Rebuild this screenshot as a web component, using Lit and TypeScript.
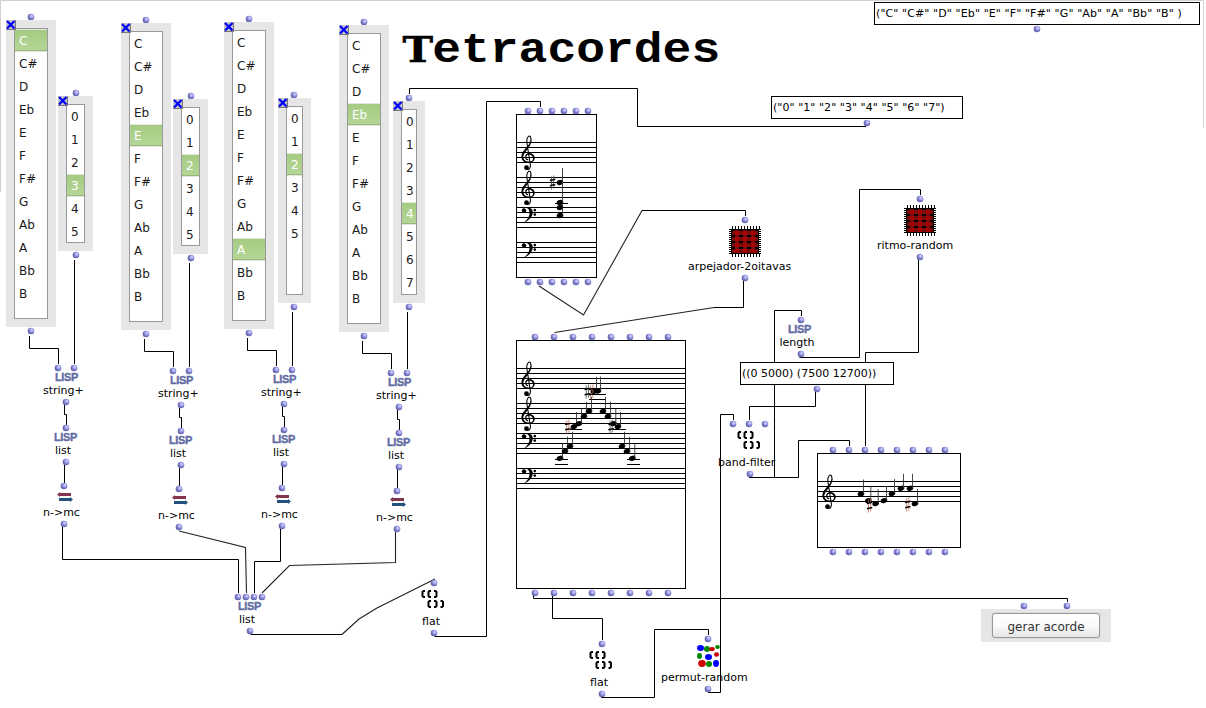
import { LitElement, html, svg, css } from "lit";
import { customElement, property } from "lit/decorators.js";

type Pt = [number, number];

const NOTES = ["C", "C#", "D", "Eb", "E", "F", "F#", "G", "Ab", "A", "Bb", "B"];
const nums = (n: number) => Array.from({ length: n }, (_, i) => String(i));

interface ListSpec {
  x: number; y: number; w: number; h: number;
  items: string[]; sel: number; port: number;
}

const LISTS: ListSpec[] = [
  { x: 6, y: 20, w: 50, h: 307, items: NOTES, sel: 0, port: 31 },
  { x: 58, y: 96, w: 35, h: 155, items: nums(6), sel: 3, port: 76 },
  { x: 121, y: 23, w: 50, h: 307, items: NOTES, sel: 4, port: 146 },
  { x: 173, y: 99, w: 35, h: 155, items: nums(6), sel: 2, port: 191 },
  { x: 224, y: 22, w: 50, h: 307, items: NOTES, sel: 9, port: 249 },
  { x: 278, y: 98, w: 33, h: 205, items: nums(6), sel: 2, port: 294 },
  { x: 339, y: 25, w: 50, h: 307, items: NOTES, sel: 3, port: 364 },
  { x: 393, y: 101, w: 32, h: 202, items: nums(8), sel: 4, port: 409 },
];

/** Offsets of the four string+ / list / n->mc chains. */
const CHAINS: Pt[] = [[0, 0], [115, 3], [218, 2], [333, 5]];

const WIRES = [
  "M74.5 260V364", "M189.5 263V367", "M292.5 312V366", "M407.5 312V369",
  "M62.5 527V559.5H238.5V593",
  "M280.5 529V561.5H254.5V593",
  "M250.5 634.5H342",
  "M434.5 636.5H486.5V101.5H540.5V107",
  "M409.5 94V88.5H637.5V126.5H866",
  "M642 210.5H745.5V216",
  "M743.5 281V307.5H714",
  "M774.5 477V310.5H801.5V316",
  "M799.5 357.5H859.5V189.5H920.5V195",
  "M918.5 260V352.5H865.5V446",
  "M815.5 392V406.5H749.5V420",
  "M749 477.5H798.5V440.5H849.5V446",
  "M708 692.5H720.5V414.5H733.5V420",
  "M533.5 596V598.5H1067.5V602",
  "M552.5 596V618.5H602.5V640",
  "M601 697.5H654.5V629.5H708.5V635",
];

const SLANTED = [
  "M179 531L245.5 547.5L246.5 593",
  "M395.5 532V562.5L289.5 565.5L262 593",
  "M342 634.5L359 619L377 608L435 579",
  "M539 286L583.5 315L642 210.5",
  "M554.5 332.5L714 307.5",
];

const row = (n: number, x: number, dx: number, y: number): Pt[] =>
  Array.from({ length: n }, (_, i) => [x + i * dx, y] as Pt);

const PORTS: Pt[] = [
  ...LISTS.flatMap((l) => [[l.port, l.y - 3], [l.port, l.y + l.h + 4]] as Pt[]),
  ...CHAINS.flatMap(([dx, dy]) =>
    ([[58, 368], [74, 368], [66, 402], [66, 428], [66, 462], [64, 486], [64, 524]] as Pt[])
      .map(([x, y]) => [x + dx, y + dy] as Pt)),
  ...row(4, 238, 8, 597), [250, 631], [434, 583], [434, 633],
  ...row(6, 528, 12, 111), ...row(6, 528, 12, 282),
  ...row(8, 535, 19, 337), ...row(8, 535, 19, 593),
  ...row(8, 833, 16, 450), ...row(8, 833, 16, 552),
  [1037, 29], [867, 123], [745, 220], [745, 278], [920, 199], [920, 257],
  [801, 320], [801, 354], [817, 389], ...row(3, 733, 16, 424), [750, 474],
  [602, 644], [602, 694], [708, 639], [708, 689], [1024, 606], [1067, 606],
];

/** The title's cells are 28.8px wide; its glyphs are stretched sideways. */
const STRETCH = 1.143;
const TITLE_X = Array.from({ length: 11 }, (_, i) => ((417.8 + i * 28.8) / STRETCH).toFixed(2));

const TREBLE =
  "M11.7 17.3C8.3 16.6 8.2 11.8 12.5 11.3C16 11 18.3 13.8 17.6 16.4C16.5 20.8 6.6 21.2 6 14.6C5.8 9.5 14.6 4.6 14.5 -2.2C14.5 -5.4 13.5 -6.8 12.5 -6.4C10.6 -5.2 10 -2 10.5 1L13.9 22.5C14.2 25.8 12.4 27.4 10.5 27";

const treble = (x: number, y: number) => svg`
  <g transform="translate(${x} ${y})">
    <path class="thin" d=${TREBLE}/>
    <path d="M14.8 -3C15 3 6.8 8 6.6 13.6C6.6 17 8.6 19 11 19.6C7 20 4.6 16.5 4.9 13.4C5.4 7.6 13.3 3.6 14 -2Z"/>
    <path d="M9 13.4C9.6 10.6 14.6 9.4 17 12.6C19.2 16 16.6 19 15 19.4C17 17.4 17 15 15.6 13.4C13.6 11.6 11 11.8 9 13.4Z"/>
    <circle cx="10" cy="25.2" r="2.4"/>
  </g>`;

const bass = (x: number, y: number) => svg`
  <g transform="translate(${x} ${y})">
    <path d="M5.2 3.4C5.4 -1.2 16 -2.2 16.3 4.6C16.3 10 11.6 13.8 6.8 15.4C10.8 12.6 13 9.6 13 5C13 0 8.6 -.4 6.8 1.8Z"/>
    <circle cx="7.6" cy="3.1" r="2.2"/>
    <circle cx="18.3" cy="2.6" r="1.3"/><circle cx="18.3" cy="7.1" r="1.3"/>
  </g>`;

const staff = (x1: number, x2: number, y: number) =>
  svg`<path class="wire" d=${[0, 5, 10, 15, 20].map((d) => `M${x1} ${y + d}H${x2}`).join("")}/>`;

const head = (x: number, y: number) =>
  svg`<ellipse cx=${x} cy=${y} rx="3.4" ry="2.5" transform="rotate(-18 ${x} ${y})"/>`;

const note = ([x, y]: Pt) => svg`${head(x, y)}<path class="stem" d="M${x + 2.5} ${y}V${y - 14.5}"/>`;

const sharp = (x: number, y: number, red = false) => svg`
  <g transform="translate(${x} ${y})">
    <path class=${red ? "sharp-red" : "sharp-v"} d="M-1 -6V7M1.2 -7V6"/>
    <path class="sharp-h" d="M-2.6 -2L2.8 -3.2M-2.6 3.2L2.8 2"/>
  </g>`;

const lisp = (x: number, y: number) => svg`<text class="lisp" x=${x} y=${y}>LISP</text>`;
const label = (x: number, y: number, t: string) => svg`<text class="label" x=${x} y=${y}>${t}</text>`;

const brackets = (x: number, y: number) => svg`
  <path class="bracket" transform="translate(${x} ${y})"
    d="M5 1H3.5L2.5 2V6L3.5 7H5M11 1H9.5L8.5 2V6L9.5 7H11M14 1H15.5L16.5 2V6L15.5 7H14
       M11 11H9.5L8.5 12V16L9.5 17H11M14 11H15.5L16.5 12V16L15.5 17H14M20.5 11H22L23 12V16L22 17H20.5"/>`;

const chip = (x: number, y: number) => svg`
  <g transform="translate(${x} ${y})">
    <path class="pin-v" d="M3 1.5H31M3 29.5H31"/>
    <path class="pin-h" d="M1 3V28M31 3V28"/>
    <rect x="2" y="3" width="28" height="25"/>
    <g fill="#7a0c0c">
      ${[6, 14, 22].map((c) => svg`<rect x=${c} y="4" width="4" height="23"/>`)}
      ${[5, 11, 17, 23].map((r) => svg`<rect x="3" y=${r} width="26" height="4"/>`)}
    </g>
    <g fill="#a80000">
      ${[5, 11, 17, 23].map((r) => [6, 14, 22].map((c) => svg`<rect x=${c} y=${r} width="4" height="4"/>`))}
    </g>
  </g>`;

const ASCENT: Pt[] = [[560, 458.3], [565, 451.3], [570, 446.3], [574, 426.6], [579, 423.6], [584, 416.3],
  [589, 411.3], [594, 391.3], [598, 391], [603, 411.3], [608, 416.3], [613.3, 423.6], [618, 426.6],
  [622, 446.3], [627, 451.3], [632.3, 458.3]];

const MELODY: Pt[] = [[861, 494], [868.3, 500.6], [875.7, 503.6], [884, 500.6], [892, 493.6],
  [901, 488.3], [910, 488.3], [915, 503.6]];

const BLOBS: [number, number, number, number, string][] = [
  [700.5, 648, 3.5, 3, "#00f"], [707, 649, 3, 3, "#008800"], [712, 649, 2.8, 2, "#c00"], [717.5, 647, 2.3, 2, "#008800"],
  [699.5, 656, 2.5, 3, "#008800"], [708.5, 657, 3.5, 3, "#00f"], [716.5, 654.5, 2.5, 2.3, "#c00"],
  [702, 663.5, 3.8, 3.4, "#c00"], [709, 664, 3, 3, "#008800"], [716, 663.5, 3, 3.4, "#00f"],
];

@customElement("list-box")
class ListBox extends LitElement {
  @property({ attribute: false }) items: string[] = [];
  @property({ type: Number }) selected = 0;

  static styles = css`
    :host { box-sizing: border-box; display: flex; padding: 8px; background: #e6e6e6;
      font: 12px "DejaVu Sans", sans-serif; color: #1a1a1a; }
    .close { position: absolute; left: 0; top: 0; width: 10px; height: 10px; display: block; }
    .rows { flex: 1; box-sizing: border-box; border: 1px solid #999; background: #fff; }
    .row { box-sizing: border-box; height: 23px; line-height: 25px; padding-left: 4px; white-space: nowrap; }
    .on { color: #fff; border-top: 1px solid #e2e6de; border-bottom: 1px solid #e2e6de; line-height: 23px;
      background: linear-gradient(#a5cb81, #b5d698); box-shadow: inset 0 -1px #98b87a; }
  `;

  render() {
    return html`
      <div class="rows">
        ${this.items.map((t, i) => html`<div class="row ${i === this.selected ? "on" : ""}">${t}</div>`)}
      </div>
      <svg class="close" viewBox="0 0 10 10">
        <rect width="10" height="10" fill="#777"/><rect width="9" height="9" fill="#c4c4c4"/>
        <path d="M1 1L8.5 8.5M8.5 1L1 8.5" stroke="#00f" stroke-width="2.3"/>
      </svg>`;
  }
}

@customElement("app-root")
class AppRoot extends LitElement {
  static styles = css`
    :host { display: block; position: relative; width: 1206px; height: 708px; overflow: hidden; background: #fff; }
    .canvas { display: block; width: 1206px; height: 708px; }
    .node { position: absolute; }
    .frame { fill: none; stroke: #d0d0d0; }
    .wire { fill: none; stroke: #000; }
    .slant { fill: none; stroke: #222; stroke-width: 1.1; }
    .box { fill: #fff; stroke: #000; }
    .thin { fill: none; stroke: #000; stroke-width: 1.1; }
    .stem { stroke: #333; stroke-width: .9; }
    .sharp-v { stroke: #444; stroke-width: .8; }
    .sharp-red { stroke: #c0694f; stroke-width: .8; }
    .sharp-h { stroke: #000; stroke-width: 1.4; }
    .bracket { fill: none; stroke: #000; stroke-width: 2; }
    .pin-v { stroke: #000; stroke-width: 3; stroke-dasharray: 1 2; }
    .pin-h { stroke: #000; stroke-width: 2; stroke-dasharray: 1 1; }
    .label { font: 11px "DejaVu Sans", sans-serif; fill: #000; white-space: pre; }
    .digits { letter-spacing: .05px; }
    .names { letter-spacing: .1px; }
    .lisp { font: bold 11px "Liberation Sans", sans-serif; fill: #626ca4; stroke: #626ca4; stroke-width: .35;
      letter-spacing: -.35px; }
    .title { font: bold 42px "Liberation Mono", monospace; text-anchor: middle; }
    .initial { font: bold 36px "DejaVu Serif", serif; stroke: #000; stroke-width: .5; }
    .panel { width: 130px; height: 33px; display: flex; align-items: center; justify-content: center;
      background: #e6e6e6; }
    .button { box-sizing: border-box; width: 108px; height: 25px; margin: 0; padding: 2px 0 0; border: 1px solid #999;
      border-radius: 3px; font: 12px "DejaVu Sans", sans-serif; color: #333;
      background: linear-gradient(#fff, #fbfbfb 50%, #e4e4e4); box-shadow: 0 0 1px #888; }
  `;

  render() {
    return html`
      <svg class="canvas" viewBox="0 0 1206 708">
        <defs>
          <radialGradient id="ball" cx=".62" cy=".36" r=".62">
            <stop offset="0" stop-color="#d8d8ff"/><stop offset=".35" stop-color="#a9a9ee"/>
            <stop offset=".65" stop-color="#7c7cce"/><stop offset="1" stop-color="#6060a8"/>
          </radialGradient>
        </defs>
        <path class="frame" d="M.5 192V.5H1203.5V128"/>
        <text class="title" transform="scale(${STRETCH} 1)" y="62"><tspan class="initial"
          x=${TITLE_X[0]}>T</tspan><tspan x=${TITLE_X.slice(1).join(" ")}>etracordes</tspan></text>

        <path class="wire" d=${WIRES.join("")}/>
        <path class="slant" d=${SLANTED.join("")}/>
        ${CHAINS.map(([dx, dy]) => svg`
          <g transform="translate(${dx} ${dy})">
            <path class="wire" d="M29.5 336V348.5H58.5V364M64.5 405V414.5H66.5V425M64.5 465V483"/>
            ${lisp(55, 381)}${label(43, 394, "string+")}
            ${lisp(54, 441)}${label(55, 454, "list")}
            <path d="M57 494.5L60 492V493H71V496H60V497Z" fill="#84344c"/>
            <path d="M73 499.5L70 497V498H59V501H70V502Z" fill="#24527f"/>
            ${label(43, 516, "n->mc")}
          </g>`)}
        ${lisp(238, 610)}${label(239, 623, "list")}
        ${brackets(420, 590)}${label(422, 625, "flat")}
        ${brackets(588, 651)}${label(590, 686, "flat")}
        ${brackets(736, 431)}${label(718, 466, "band-filter")}
        ${lisp(788, 333)}${label(779.5, 346, "length")}
        ${chip(729, 226)}${label(688, 270, "arpejador-2oitavas")}
        ${chip(904, 205)}${label(877, 249, "ritmo-random")}
        ${BLOBS.map(([x, y, rx, ry, c]) => svg`<ellipse cx=${x} cy=${y} rx=${rx} ry=${ry} fill=${c}/>`)}
        ${label(661, 681, "permut-random")}

        <rect class="box" x="874.5" y="2.5" width="325" height="22"/>
        <text class="label names" x="876" y="17">("C" "C#" "D" "Eb" "E" "F" "F#" "G" "Ab" "A" "Bb" "B" )</text>
        <rect class="box" x="771.5" y="96.5" width="191" height="22"/>
        <text class="label digits" x="773" y="111">("0" "1" "2" "3" "4" "5" "6" "7")</text>
        <rect class="box" x="740.5" y="362.5" width="153" height="22"/>
        ${label(742, 377, "((0 5000) (7500 12700))")}

        <rect class="box" x="516.5" y="114.5" width="80" height="163"/>
        ${[142.5, 177.5, 207.5, 242.5].map((y) => staff(517, 596, y))}
        ${treble(516.5, 142.5)}${treble(516.5, 177.5)}${bass(516.5, 207.5)}${bass(516.5, 242.5)}
        ${head(560, 182.5)}${head(560, 202.5)}${head(560, 207.5)}${head(560, 215.5)}
        <path class="stem" d="M562.5 168V215"/><path class="wire" d="M555 203.5H568"/>
        ${sharp(552.5, 182.5)}

        <rect class="box" x="516.5" y="340.5" width="169" height="248"/>
        ${[368.5, 403.5, 433.5, 468.5].map((y) => staff(517, 685, y))}
        ${treble(516.5, 368.5)}${treble(516.5, 403.5)}${bass(516.5, 433.5)}${bass(516.5, 468.5)}
        <path class="wire" d="M555 459.5H568M555 464.5H568M627 459.5H640M627 464.5H640M570 429.5H582M613 429.5H626M590 394.5H606M589 399.5H606"/>
        ${ASCENT.map(note)}
        ${sharp(567.7, 426.6, true)}${sharp(587.2, 391.6)}${sharp(591.6, 391.6, true)}${sharp(611, 426.6)}

        <rect class="box" x="817.5" y="453.5" width="143" height="94"/>
        ${staff(818, 960, 481.5)}${treble(817.5, 481.5)}
        ${MELODY.map(note)}
        ${sharp(869.5, 505.5, true)}${sharp(907.7, 504.5, true)}

        ${PORTS.map(([x, y]) => svg`<circle cx=${x} cy=${y} r="3.3" fill="url(#ball)"/>`)}
      </svg>
      ${LISTS.map((l) => html`
        <list-box class="node" .items=${l.items} .selected=${l.sel}
          style="left:${l.x}px;top:${l.y}px;width:${l.w}px;height:${l.h}px"></list-box>`)}
      <div class="node panel" style="left:981px;top:609px"><button class="button">gerar acorde</button></div>
    `;
  }
}
